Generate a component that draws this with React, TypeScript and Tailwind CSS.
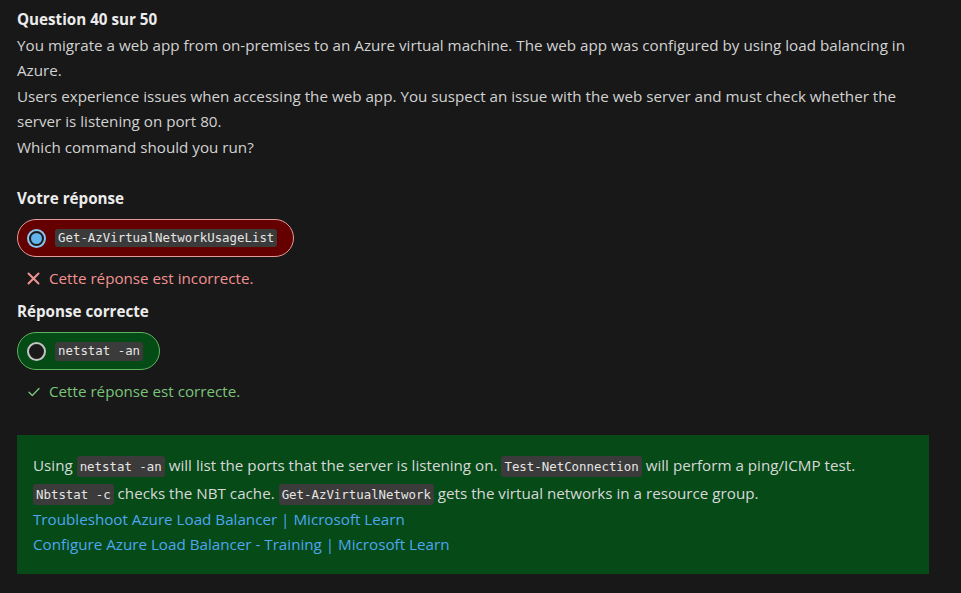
const sans = "font-['Open_Sans',sans-serif]";
const mono = "font-['DejaVu_Sans_Mono',monospace]";

function Code({ children }: { children: string }) {
  return (
    <code className={`${mono} text-[12.4px] leading-none bg-[#3b3b3b] text-[#e6e6e6] rounded-[3px] px-[3px] py-[3px]`}>
      {children}
    </code>
  );
}

export default function App() {
  return (
    <div className={`${sans} min-h-[593px] bg-[#181818] text-[#d2d2d2] text-[15.2px] leading-[25.6px] px-[17px] pt-[7px]`}>
      <h2 className="font-bold text-[#ececec]">Question 40 sur 50</h2>
      <p className="pr-[15px]">
        You migrate a web app from on-premises to an Azure virtual machine. The web app was configured by using load balancing in Azure.
      </p>
      <p className="pr-[15px]">
        Users experience issues when accessing the web app. You suspect an issue with the web server and must check whether the server is listening on port 80.
      </p>
      <p>Which command should you run?</p>

      <h3 className="font-bold text-[#ececec] mt-[25px]">Votre réponse</h3>
      <div className="mt-[8px] inline-flex items-center gap-[9px] h-[38px] pl-[9px] pr-[16px] rounded-full bg-[#640000] border border-[#e49b9b]">
        <span className="w-[19px] h-[19px] rounded-full border-2 border-[#8cc4ee] bg-[#1a1a1a] flex items-center justify-center">
          <span className="w-[11px] h-[11px] rounded-full bg-[#63b3ed]" />
        </span>
        <Code>Get-AzVirtualNetworkUsageList</Code>
      </div>
      <div className="flex items-center gap-[9px] mt-[9px] pl-[10px] text-[#f19292]">
        <svg width="13" height="13" viewBox="0 0 13 13" fill="none" stroke="currentColor" strokeWidth="2" strokeLinecap="round">
          <path d="M1.5 1.5L11.5 11.5M11.5 1.5L1.5 11.5" />
        </svg>
        <span>Cette réponse est incorrecte.</span>
      </div>

      <h3 className="font-bold text-[#ececec] mt-[7px]">Réponse correcte</h3>
      <div className="mt-[8px] inline-flex items-center gap-[9px] h-[38px] pl-[9px] pr-[16px] rounded-full bg-[#054b16] border border-[#5fb25f]">
        <span className="w-[19px] h-[19px] rounded-full border-2 border-[#c4c4c4] bg-[#1a1a1a]" />
        <Code>netstat -an</Code>
      </div>
      <div className="flex items-center gap-[9px] mt-[9px] pl-[11px] text-[#7ac47a]">
        <svg width="12" height="10" viewBox="0 0 12 10" fill="none" stroke="currentColor" strokeWidth="1.4" strokeLinecap="round" strokeLinejoin="round">
          <path d="M1 5.2L4.3 8.5L11 1.5" />
        </svg>
        <span>Cette réponse est correcte.</span>
      </div>

      <div className="mt-[30px] mr-[15px] bg-[#054a17] px-[16px] pt-[16px] pb-[16px] text-[#d8d8d8]">
        <p className="leading-[28px]">
          Using <Code>netstat -an</Code> will list the ports that the server is listening on. <Code>Test-NetConnection</Code> will perform a ping/ICMP test.
          <br />
          <Code>Nbtstat -c</Code> checks the NBT cache. <Code>Get-AzVirtualNetwork</Code> gets the virtual networks in a resource group.
        </p>
        <a href="#" className="block leading-[25.5px] text-[#4ea6ef]">Troubleshoot Azure Load Balancer | Microsoft Learn</a>
        <a href="#" className="block leading-[25.5px] text-[#4ea6ef]">Configure Azure Load Balancer - Training | Microsoft Learn</a>
      </div>
    </div>
  );
}
